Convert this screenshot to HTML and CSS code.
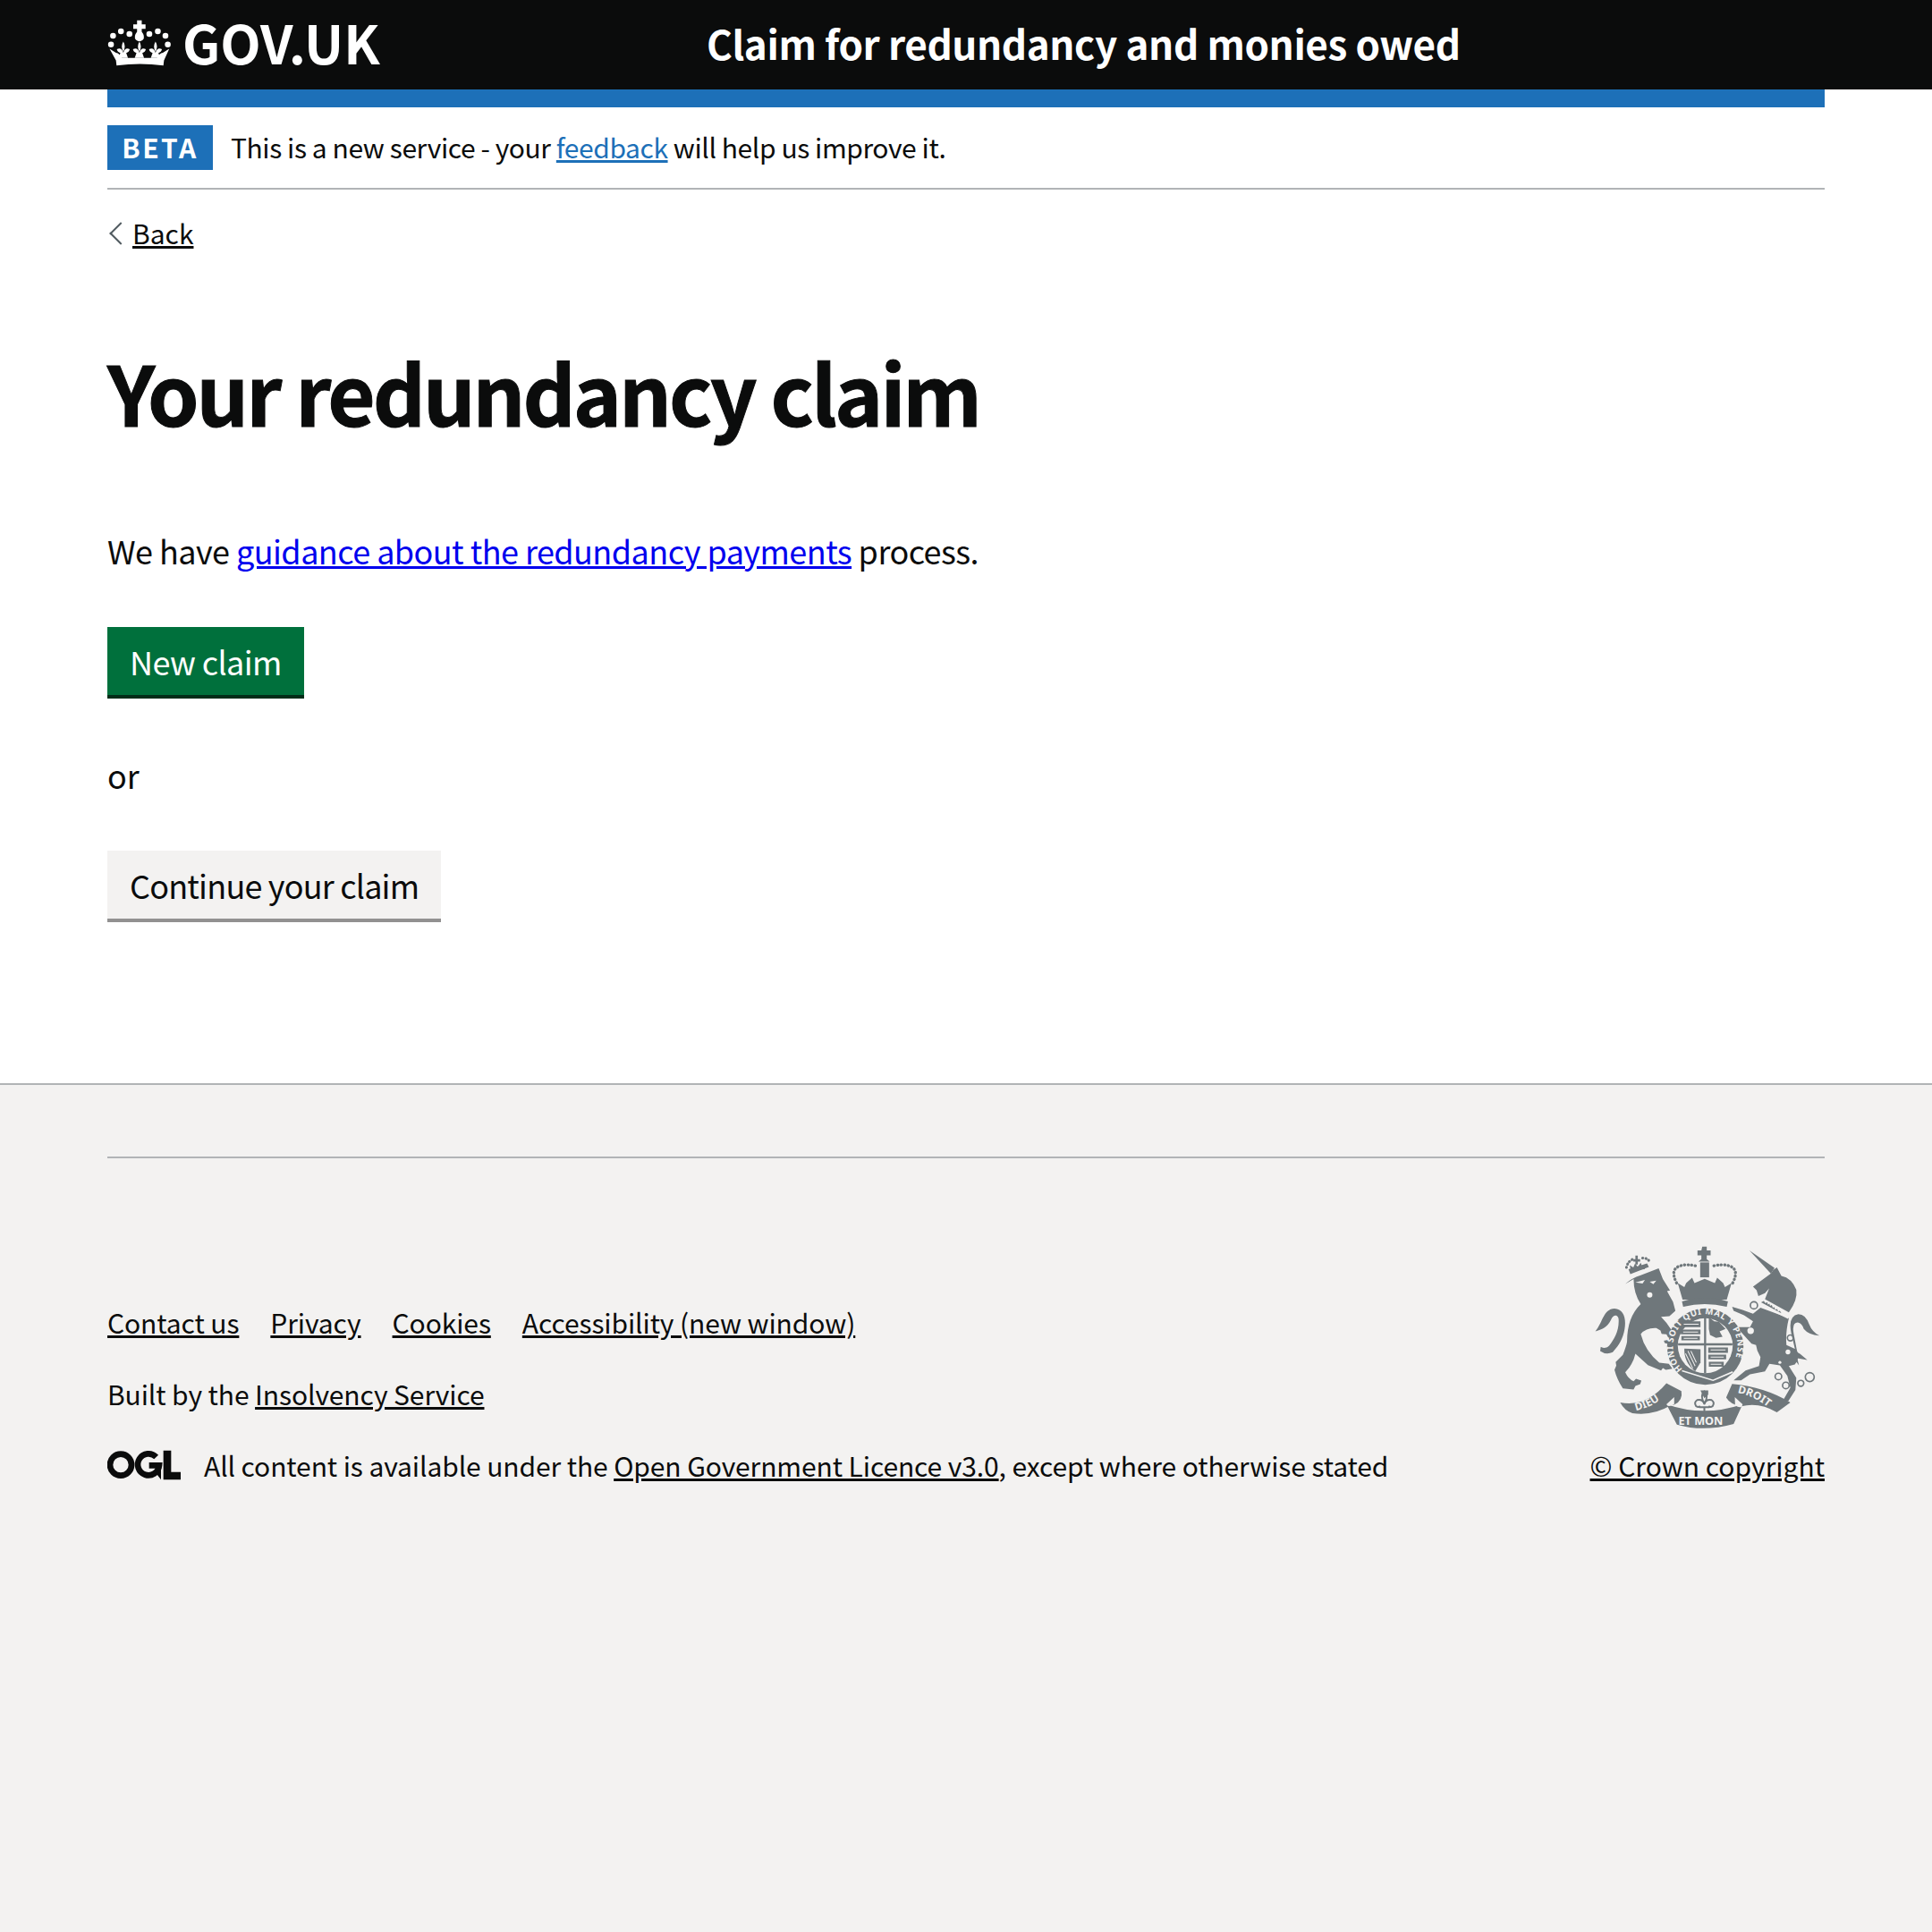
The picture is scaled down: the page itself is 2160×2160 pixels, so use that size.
FILE: index.html
```html
<!DOCTYPE html>
<html lang="en">
<head>
    <meta charset="UTF-8">
    <title>Your redundancy claim</title>
    <link rel="stylesheet" href="styles.css">
</head>
<body>
    <header class="header">
        <div class="header-container">
            <a class="header-logo" href="#">
                <svg class="crown" viewBox="60 60 220 165" aria-hidden="true">
                    <defs>
                        <path id="fleur" d="M0 138q10 16 0 34-10-18 0-34zM0 176q-6-20-22-12 2 10 12 13l-6 17h32l-6-17q10-3 12-13-16-8-22 12z"/>
                    </defs>
                    <g fill="#fff">
                        <circle cx="71" cy="148" r="10"/>
                        <circle cx="78" cy="118" r="10"/>
                        <circle cx="105" cy="103" r="10"/>
                        <circle cx="134" cy="112" r="10"/>
                        <circle cx="202" cy="112" r="10"/>
                        <circle cx="231" cy="103" r="10"/>
                        <circle cx="257" cy="118" r="10"/>
                        <circle cx="265" cy="148" r="10"/>
                        <path d="M160 65h16v14h13v15h-13v10q13 16 4 28q-12 10-24 0q-9-12 4-28V94h-13V79h13z"/>
                        <use href="#fleur" x="113"/>
                        <use href="#fleur" x="168"/>
                        <use href="#fleur" x="223"/>
                        <path d="M66 162l22 14q12 2 20 18h120q8-16 20-18l22-14-18 40-2 18q-80-12-160 0l-2-18z"/>
                    </g>
                </svg>
                <span class="logo-text">GOV.UK</span>
            </a>
            <div class="header-service">Claim for redundancy and monies owed</div>
        </div>
    </header>

    <div class="width-container">
        <div class="blue-bar"></div>
        <div class="phase-banner">
            <strong class="phase-tag">BETA</strong>
            <span class="phase-text">This is a new service - your <a class="link-blue" href="#">feedback</a> will help us improve it.</span>
        </div>
        <a class="back-link" href="#">Back</a>

        <main class="main">
            <h1 class="heading">Your redundancy claim</h1>
            <p class="body-text">We have <a class="link-default" href="#">guidance about the redundancy payments</a> process.</p>
            <a class="button" href="#">New claim</a>
            <p class="or-text">or</p>
            <a class="button button-secondary" href="#">Continue your claim</a>
        </main>
    </div>

    <footer class="footer">
        <div class="width-container">
            <div class="footer-line"></div>
            <div class="footer-meta">
                <div class="footer-left">
                    <ul class="footer-links">
                        <li><a href="#">Contact us</a></li>
                        <li><a href="#">Privacy</a></li>
                        <li><a href="#">Cookies</a></li>
                        <li><a href="#">Accessibility (new window)</a></li>
                    </ul>
                    <p class="built-by">Built by the <a href="#">Insolvency Service</a></p>
                    <div class="licence">
                        <svg class="ogl" viewBox="60 60 246 102" aria-hidden="true">
                            <circle cx="105" cy="110" r="36" fill="none" stroke="#0b0c0c" stroke-width="20"/>
                            <path d="M224 84a36 36 0 1 0 10 28h-34" fill="none" stroke="#0b0c0c" stroke-width="20"/>
                            <path d="M226 104h14v56l-14-18zM248 62h26v72h32v26h-58z" fill="#0b0c0c"/>
                        </svg>
                        <span>All content is available under the <a href="#">Open Government Licence v3.0</a>, except where otherwise stated</span>
                    </div>
                </div>
                <div class="footer-right">
                    <svg class="crest" viewBox="70 45 755 620" aria-hidden="true">
                        <defs>
                            <path id="garter" d="M364 461a108 108 0 1 1 152 0"/>
                            <path id="ribbon-left" d="M208 600q60-14 104-56"/>
                            <path id="ribbon-right" d="M548 540q70 14 122 66"/>
                        </defs>
                        <g fill="#6f777b">
                            <!-- lion crown -->
                            <path d="M183 126l62-20 6 12-62 24z"/>
                            <path d="M199 92h7V80h8v12h8v8h-8v10h-8v-10h-7z"/>
                            <path d="M190 128l-3-16 12 8 6-14 9 12 10-14 5 14 11-8-3 16z"/>
                            <!-- lion -->
                            <path d="M172 175q24-20 50-28l62-24 14 36 24 38-10 2 20 36 8 30-20 18-28 2q40 40 48 80l-14 14-22-6-14-42-14-8q-34-2-52 20 14 56 62 96l32 4 12 16-22 4-10-6-6 8-44-18-42-38q-8 36-34 62 10 22 28 30l8-8 18 6-4 12-16 6-6 12-36-4q-20-30-28-62l6-14-2-12 24-24q12-32 14-44 0-82 46-126-24-36-24-84z"/>
                            <!-- lion tail -->
                            <path d="M146 384c32-40 40-124-10-126-38 2-38 44-64 76 26-8 38-12 52-38 8-22 28-20 26 4 0 34-16 62-32 82-14 14-28 4-28 4l-2 14q20 14 42 4z"/>
                            <!-- unicorn horn and head -->
                            <path d="M588 63l84 58-12 20z"/>
                            <path d="M660 140l-60 44 12 12 6 20 22-10 14-16-14 36 80 44q30-40 25-75-15-40-50-47l-15-28-12 8z"/>
                            <!-- unicorn body -->
                            <path d="M625 255l95 35q-12 50-8 90l33 15q15 25-5 50l-20 5 25 40-3 40-24 38-18-2 25-43-10-40-25-35-35-5-15 25-50 10-30 20h-25l40-33 45-15 5-30q-13-20-15-40l-15-5-50-55h45l10-20-30-20-35-15-5-13 35 10 35 13z"/>
                            <!-- unicorn tail -->
                            <path d="M822 348q-24-12-34-38-12-34-36-34-36 6-24 64l14 60-34 20 10 10 18-6 18 24-6-24 34 6-24-20-10-6-12-64q-6-36 14-36 14 2 20 22 16 20 52 22z"/>
                            <!-- crown -->
                            <path d="M430 50h15v13h13v16h-13v13l10 8h-38l10-8V79h-13V63h13z"/>
                            <path d="M423 103h30v50h-30z"/>
                            <path d="M348 172l22 14 6-14 20-18 8 18 34-14 34 14 8-18 20 18 6 14 22-14-16 56H364z"/>
                            <path d="M362 234q78-24 154 0l-4 18q-74-18-146 0z"/>
                            <!-- garter -->
                            <circle cx="440" cy="385" r="128"/>
                        </g>
                        <g fill="#f3f2f1">
                            <!-- lion face, unicorn chain links filled -->
                            <circle cx="254" cy="212" r="9"/>
                            <path d="M206 170l32-8-8 12zM290 342l20 2 10 18-24 4zM254 168l22-4-10 12z"/>
                            <circle cx="440" cy="382" r="92"/>
                            <circle cx="592" cy="332" r="11"/>
                            <circle cx="717" cy="403" r="8"/>
                            <circle cx="690" cy="438" r="5"/>
                            <path d="M628 238l92 46-3 8-92-46z"/>
                        </g>
                        <g fill="#6f777b">
                            <!-- shield quarters -->
                            <path d="M349 374h182v7H349zM436 284h7v190h-7z"/>
                            <path d="M362 300h62v20h-62zM358 328h66v16h-66zM360 350h62v14h-62z"/>
                            <path d="M452 286l18 14 16 2 22 24-20 8 10 18-22 4-20-10-4-20z"/>
                            <path d="M370 392l54 2v44l-18 30q-38-30-36-76z"/>
                            <path d="M450 388h66v18h-66zM450 412h60v16h-60zM452 436h50v16h-50z"/>
                            <path d="M636 232l6 8 5-4 3 8 5-3 2 8 6-3 3 9 6-2 2 8 7-2 3 8 6-2 5 8-68-36z"/>
                        </g>
                        <g fill="none" stroke="#f3f2f1" stroke-width="3">
                            <path d="M382 400l24 50M392 400l18 38M374 408l24 50"/>
                            <path d="M368 310h50M366 336h50M368 357h46M458 396h50M458 420h44M458 444h36"/>
                        </g>
                        <path d="M362 466l104 32 66-28" fill="none" stroke="#f3f2f1" stroke-width="5"/>
                        <g fill="none" stroke="#6f777b">
                            <!-- pearl arches of both crowns -->
                            <path d="M344 172q-22-44 8-56 24-10 62 0M532 172q22-44-8-56-24-10-62 0" stroke-width="10" stroke-dasharray="1 11" stroke-linecap="round"/>
                            <path d="M176 120q4-20 22-28M230 88q18 0 26 16" stroke-width="9" stroke-dasharray="1 10" stroke-linecap="round"/>
                            <!-- unicorn chain -->
                            <circle cx="603" cy="247" r="12" stroke-width="5"/>
                            <circle cx="725" cy="356" r="10" stroke-width="5"/>
                            <circle cx="685" cy="485" r="11" stroke-width="5"/>
                            <circle cx="710" cy="515" r="11" stroke-width="5"/>
                            <circle cx="760" cy="508" r="10" stroke-width="5"/>
                            <circle cx="790" cy="487" r="15" stroke-width="5"/>
                            <!-- fleur de lys -->
                            <path d="M437 535q16 16 0 40-16-24 0-40zM437 578q-6-18-24-14-12 8-4 20 8 6 14 0M437 578q6-18 24-14 12 8 4 20-8 6-14 0M420 588h34M437 590v18" stroke-width="6"/>
                        </g>
                        <g fill="#6f777b">
                            <!-- ribbon -->
                            <path d="M155 572q85 18 155-64l50 26q6 32-24 46l-12 2q-60 36-128 26-26-8-41-36z"/>
                            <path d="M510 556l20-46q110 10 195 62l-45 33q-60-36-120-20-35-5-50-29z"/>
                            <path d="M310 578q125 44 255 0l-30 66q-100 28-190 2z"/>
                            <path d="M424 532h26v14l-13 12z"/>
                        </g>
                        <path d="M336 578q-22 12-26 0l26-24zM540 582q22 14 25-4l-26-24z" fill="#f3f2f1"/>
                        <text class="crest-text" font-size="29" letter-spacing="2"><textPath href="#garter">HONI SOIT QUI MAL Y PENSE</textPath></text>
                        <text class="crest-text" font-size="36"><textPath href="#ribbon-left">DIEU</textPath></text>
                        <text class="crest-text" font-size="36"><textPath href="#ribbon-right">DROIT</textPath></text>
                        <text class="crest-text" x="350" y="648" font-size="38">ET MON</text>
                    </svg>
                    <a class="crown-copyright" href="#">© Crown copyright</a>
                </div>
            </div>
        </div>
    </footer>
</body>
</html>
```

FILE: styles.css
```css
* {
    box-sizing: border-box;
}
body {
    margin: 0;
    min-height: 2160px;
    display: flex;
    flex-direction: column;
    font-family: "Noto Sans CJK SC", "Noto Sans", Arial, sans-serif;
    color: #0b0c0c;
    background: #fff;
    font-size: 30px;
}
a {
    color: inherit;
}
.width-container {
    margin: 0 120px;
}

/* header */
.header {
    background: #0b0c0c;
    height: 100px;
}
.header-container {
    margin: 0 120px;
    display: flex;
    align-items: center;
    height: 100px;
}
.header-logo {
    width: 33.33%;
    display: flex;
    align-items: center;
    color: #fff;
    text-decoration: none;
}
.crown {
    width: 73px;
    height: 54px;
    margin-right: 11px;
    margin-top: -4px;
}
.logo-text {
    font-size: 59px;
    font-weight: 700;
    line-height: 94px;
    padding-bottom: 6px;
}
.header-service {
    padding: 0 0 4px 30px;
    color: #fff;
    font-size: 44px;
    font-weight: 700;
    letter-spacing: -0.4px;
}

/* phase banner */
.blue-bar {
    height: 20px;
    background: #1d70b8;
}
.phase-banner {
    display: flex;
    align-items: center;
    height: 92px;
    border-bottom: 2px solid #b1b4b6;
}
.phase-tag {
    width: 118px;
    height: 50px;
    margin-right: 20px;
    background: #1d70b8;
    color: #fff;
    font-size: 30px;
    letter-spacing: 2.5px;
    line-height: 48px;
    text-align: center;
}
.phase-text {
    letter-spacing: -0.42px;
    padding-bottom: 2px;
}
.link-blue {
    color: #1d70b8;
}

/* back link */
.back-link {
    display: inline-block;
    margin-top: 26px;
    padding-left: 28px;
    position: relative;
    line-height: 44px;
}
.back-link::before {
    content: "";
    position: absolute;
    left: 6px;
    top: 14px;
    width: 16px;
    height: 16px;
    border-left: 2px solid #505a5f;
    border-bottom: 2px solid #505a5f;
    transform: rotate(45deg);
}

/* main */
.heading {
    margin: 105px 0 0;
    font-size: 92px;
    font-weight: 700;
    letter-spacing: -3px;
    line-height: 100px;
    -webkit-text-stroke: 1px #0b0c0c;
}
.body-text {
    margin: 103px 0 0;
    font-size: 36px;
    letter-spacing: -0.55px;
    line-height: 50px;
}
.link-default {
    color: #0000ee;
}
.button {
    display: block;
    width: fit-content;
    margin-top: 61px;
    padding: 0 25px;
    height: 80px;
    line-height: 76px;
    background: #00703c;
    box-shadow: inset 0 -4px 0 #002d18;
    color: #fff;
    font-size: 36px;
    letter-spacing: -0.6px;
    text-decoration: none;
}
.button-secondary {
    margin-top: 60px;
    background: #f3f2f1;
    box-shadow: inset 0 -4px 0 #929191;
    color: #0b0c0c;
    letter-spacing: -0.8px;
}
.or-text {
    margin: 60px 0 0;
    font-size: 36px;
    line-height: 50px;
}
.main {
    padding-bottom: 180px;
}

/* footer */
.footer {
    flex: 1;
    background: #f3f2f1;
    border-top: 2px solid #b1b4b6;
}
.footer-line {
    margin-top: 80px;
    border-top: 2px solid #b1b4b6;
}
.footer-meta {
    display: flex;
    justify-content: space-between;
    align-items: flex-end;
    margin-top: 97px;
    line-height: 40px;
}
.footer-left {
    letter-spacing: -0.1px;
}
.footer-links {
    display: flex;
    margin: 0;
    padding: 0;
    list-style: none;
    gap: 35px;
}
.built-by {
    margin: 40px 0 0;
}
.licence {
    display: flex;
    align-items: center;
    margin-top: 40px;
}
.ogl {
    width: 82px;
    height: 34px;
    margin-right: 26px;
}
.footer-right {
    display: flex;
    flex-direction: column;
    align-items: center;
}
.crest {
    width: 252px;
    height: 207px;
    margin-bottom: 19px;
}
.crest-text {
    fill: #f3f2f1;
    font-family: "Noto Sans", Arial, sans-serif;
    font-weight: 700;
}
```
